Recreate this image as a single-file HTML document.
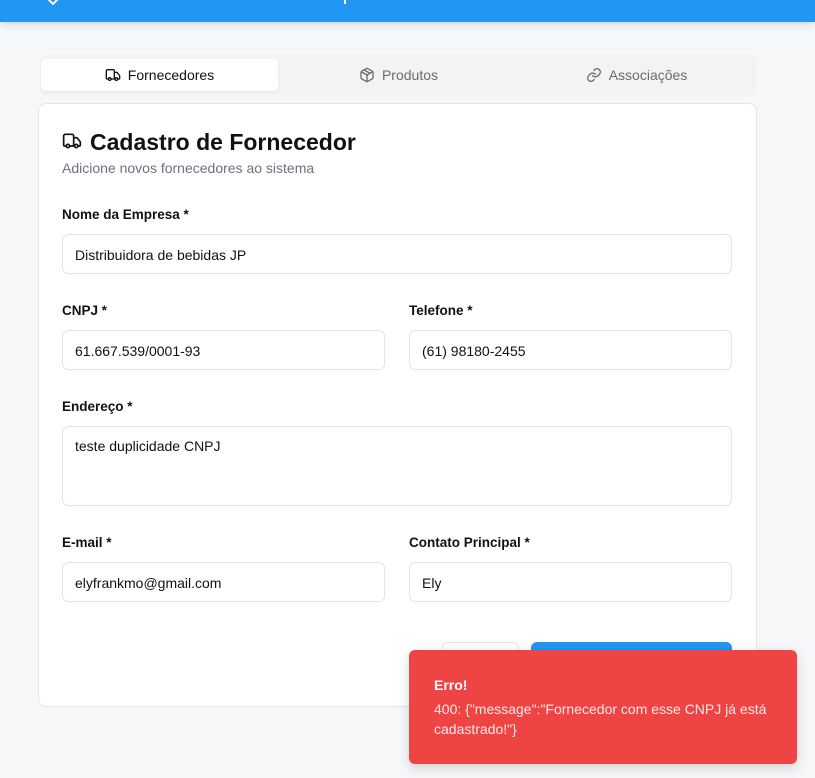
<!DOCTYPE html>
<html><head><meta charset="utf-8"><style>
*{box-sizing:border-box;margin:0;padding:0}
body{width:815px;height:778px;overflow:hidden;background:#f6f7f9;font-family:"Segoe UI","Liberation Sans",sans-serif;color:#111;position:relative}
.a{position:absolute}
.hdr{left:0;top:0;width:815px;height:22px;background:#2196f3;box-shadow:0 2px 8px rgba(0,0,0,.15)}
.tabs{left:40px;top:55px;width:717px;height:40px;background:#f3f3f1;border-radius:6px}
.tab{top:4px;height:32px;width:237px;display:flex;align-items:center;justify-content:center;font-size:14px;color:#6b6b6b;gap:7px}
.tab.on{background:#fff;color:#111;border-radius:4px;box-shadow:0 1px 2px rgba(0,0,0,.06)}
.card{left:38px;top:103px;width:719px;height:604px;background:#fff;border:1px solid #e3e5e8;border-radius:8px}
.lbl{font-size:13.5px;font-weight:600;color:#111}
.inp{height:40px;border:1px solid #e2e4e8;border-radius:6px;font-size:14px;padding:1px 12px 0;display:flex;align-items:center;color:#111;background:#fff}
svg{fill:none;stroke:currentColor;stroke-width:2;stroke-linecap:round;stroke-linejoin:round}
</style></head><body>
<div class="a hdr"><svg class="a" style="left:42px;top:-6px" width="22" height="14" viewBox="0 0 22 14"><path d="M3 2l8 8 8-8" stroke="#fff"/></svg><div class="a" style="left:344px;top:0;width:2px;height:4px;background:#fff"></div></div>
<div class="a tabs">
<div class="a tab on" style="left:1px"><svg width="16" height="16" viewBox="0 0 24 24"><path d="M14 18V6a2 2 0 0 0-2-2H4a2 2 0 0 0-2 2v11a1 1 0 0 0 1 1h2M15 18H9M19 18h2a1 1 0 0 0 1-1v-3.65a1 1 0 0 0-.22-.62l-3.48-4.35A1 1 0 0 0 17.52 8H14"/><circle cx="17" cy="18" r="2"/><circle cx="7" cy="18" r="2"/></svg>Fornecedores</div>
<div class="a tab" style="left:240px"><svg width="16" height="16" viewBox="0 0 24 24"><path d="M11 21.7a2 2 0 0 0 2 0l7-4A2 2 0 0 0 21 16V8a2 2 0 0 0-1-1.7l-7-4a2 2 0 0 0-2 0l-7 4A2 2 0 0 0 3 8v8a2 2 0 0 0 1 1.7zM12 22V12M3.3 7L12 12l8.7-5M7.5 4.3l9 5.1"/></svg>Produtos</div>
<div class="a tab" style="left:478px"><svg width="16" height="16" viewBox="0 0 24 24"><path d="M10 13a5 5 0 0 0 7.5.5l3-3a5 5 0 0 0-7-7l-1.7 1.7"/><path d="M14 11a5 5 0 0 0-7.5-.5l-3 3a5 5 0 0 0 7 7l1.7-1.7"/></svg>Associações</div>
</div>
<div class="a card"></div>
<svg class="a" style="left:62px;top:131px" width="20" height="20" viewBox="0 0 24 24"><path d="M14 18V6a2 2 0 0 0-2-2H4a2 2 0 0 0-2 2v11a1 1 0 0 0 1 1h2M15 18H9M19 18h2a1 1 0 0 0 1-1v-3.65a1 1 0 0 0-.22-.62l-3.48-4.35A1 1 0 0 0 17.52 8H14"/><circle cx="17" cy="18" r="2"/><circle cx="7" cy="18" r="2"/></svg>
<div class="a" style="left:90px;top:129px;font-size:23px;font-weight:600">Cadastro de Fornecedor</div>
<div class="a" style="left:62px;top:160px;font-size:14px;color:#6b7280">Adicione novos fornecedores ao sistema</div>
<div class="a lbl" style="left:62px;top:207px">Nome da Empresa *</div>
<div class="a inp" style="left:62px;top:234px;width:670px">Distribuidora de bebidas JP</div>
<div class="a lbl" style="left:62px;top:303px">CNPJ *</div>
<div class="a inp" style="left:62px;top:330px;width:323px">61.667.539/0001-93</div>
<div class="a lbl" style="left:409px;top:303px">Telefone *</div>
<div class="a inp" style="left:409px;top:330px;width:323px">(61) 98180-2455</div>
<div class="a lbl" style="left:62px;top:399px">Endereço *</div>
<div class="a inp" style="left:62px;top:426px;width:670px;height:80px;align-items:flex-start;padding-top:11px">teste duplicidade CNPJ</div>
<div class="a lbl" style="left:62px;top:535px">E-mail *</div>
<div class="a inp" style="left:62px;top:562px;width:323px">elyfrankmo@gmail.com</div>
<div class="a lbl" style="left:409px;top:535px">Contato Principal *</div>
<div class="a inp" style="left:409px;top:562px;width:323px">Ely</div>
<div class="a" style="left:442px;top:642px;width:77px;height:40px;border:1px solid #e2e4e8;border-radius:6px;background:#fff"></div>
<div class="a" style="left:531px;top:642px;width:201px;height:40px;border-radius:6px;background:#2196f3"></div>
<div class="a" style="left:409px;top:650px;width:388px;height:114px;background:#ef4444;border-radius:6px;box-shadow:0 4px 12px rgba(0,0,0,.15);color:#fff;padding:27px 25px">
<div style="font-size:14px;font-weight:600;margin-bottom:6px">Erro!</div>
<div style="font-size:14px;line-height:20px;color:#fde8e8">400: {"message":"Fornecedor com esse CNPJ já está cadastrado!"}</div>
</div>
</body></html>
